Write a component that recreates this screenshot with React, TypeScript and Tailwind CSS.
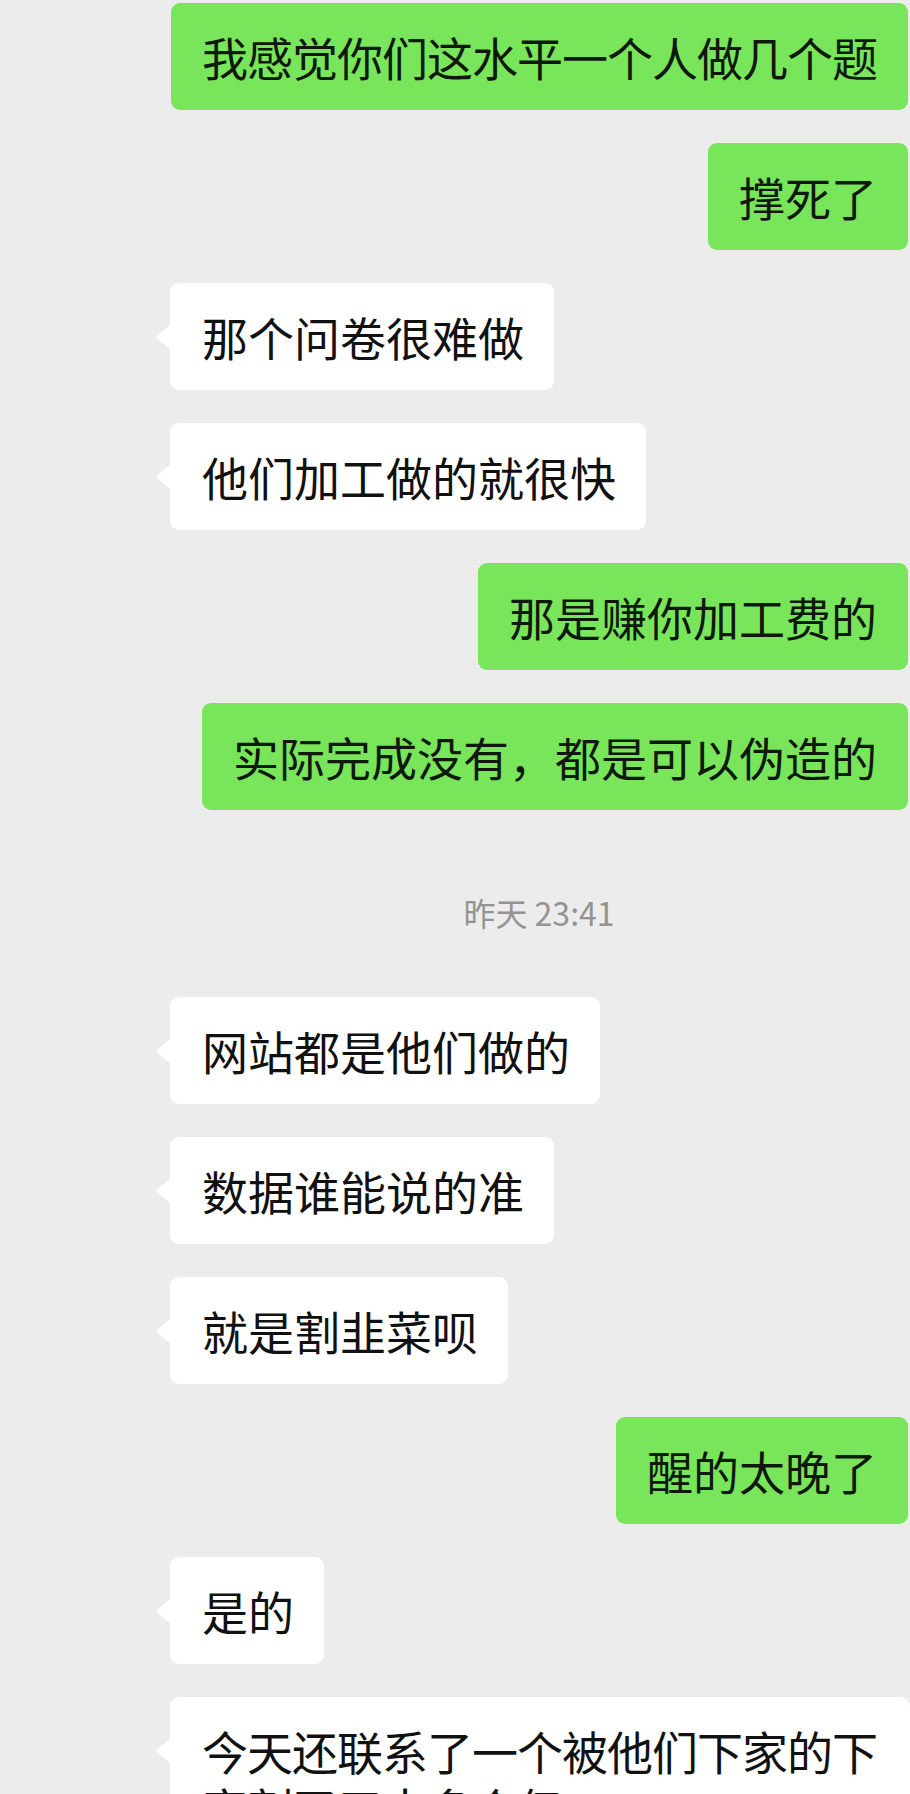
const messages = [
  { side: "right", text: "我感觉你们这水平一个人做几个题", tight: true },
  { side: "right", text: "撑死了" },
  { side: "left", text: "那个问卷很难做" },
  { side: "left", text: "他们加工做的就很快" },
  { side: "right", text: "那是赚你加工费的" },
  { side: "right", text: "实际完成没有，都是可以伪造的" },
  { side: "time", text: "昨天 23:41" },
  { side: "left", text: "网站都是他们做的" },
  { side: "left", text: "数据谁能说的准" },
  { side: "left", text: "就是割韭菜呗" },
  { side: "right", text: "醒的太晚了" },
  { side: "left", text: "是的" },
  {
    side: "left",
    text: "今天还联系了一个被他们下家的下家割了三十多个亿",
    tight: true,
  },
];

const font = {
  fontFamily: '"Noto Sans CJK SC", "Noto Sans", sans-serif',
};

function Tail() {
  return (
    <svg
      className="absolute -left-[15px] top-[41px]"
      width="16"
      height="26"
      viewBox="0 0 16 26"
    >
      <path d="M16 0 L2.5 11 Q0.5 13 2.5 15 L16 26 Z" fill="#ffffff" />
    </svg>
  );
}

export default function App() {
  return (
    <div
      className="w-[910px] h-[1794px] overflow-hidden bg-[#ececec]"
      style={font}
    >
      <div className="flex flex-col gap-[33px] pt-[3px]">
        {messages.map((m, i) => {
          if (m.side === "time") {
            return (
              <div
                key={i}
                className="ml-[168px] mt-[49px] mb-[32px] h-[40px] text-center text-[32px] leading-[40px] text-[#939393]"
              >
                {m.text}
              </div>
            );
          }
          if (m.side === "right") {
            return (
              <div key={i} className="flex justify-end pr-[2px]">
                <div
                  className={`rounded-[9px] bg-[#79e55a] px-[31px] py-[25px] text-[46px] leading-[57px] text-[#0e180b] whitespace-nowrap ${
                    m.tight ? "tracking-[-1px]" : ""
                  }`}
                >
                  {m.text}
                </div>
              </div>
            );
          }
          return (
            <div key={i} className="flex pl-[170px]">
              <div
                className={`relative max-w-[742px] rounded-[9px] bg-white pl-[32px] pr-[30px] py-[25px] text-[46px] leading-[57px] text-[#111111] ${
                  m.tight ? "tracking-[-1px]" : ""
                }`}
              >
                <Tail />
                {m.text}
              </div>
            </div>
          );
        })}
      </div>
    </div>
  );
}
